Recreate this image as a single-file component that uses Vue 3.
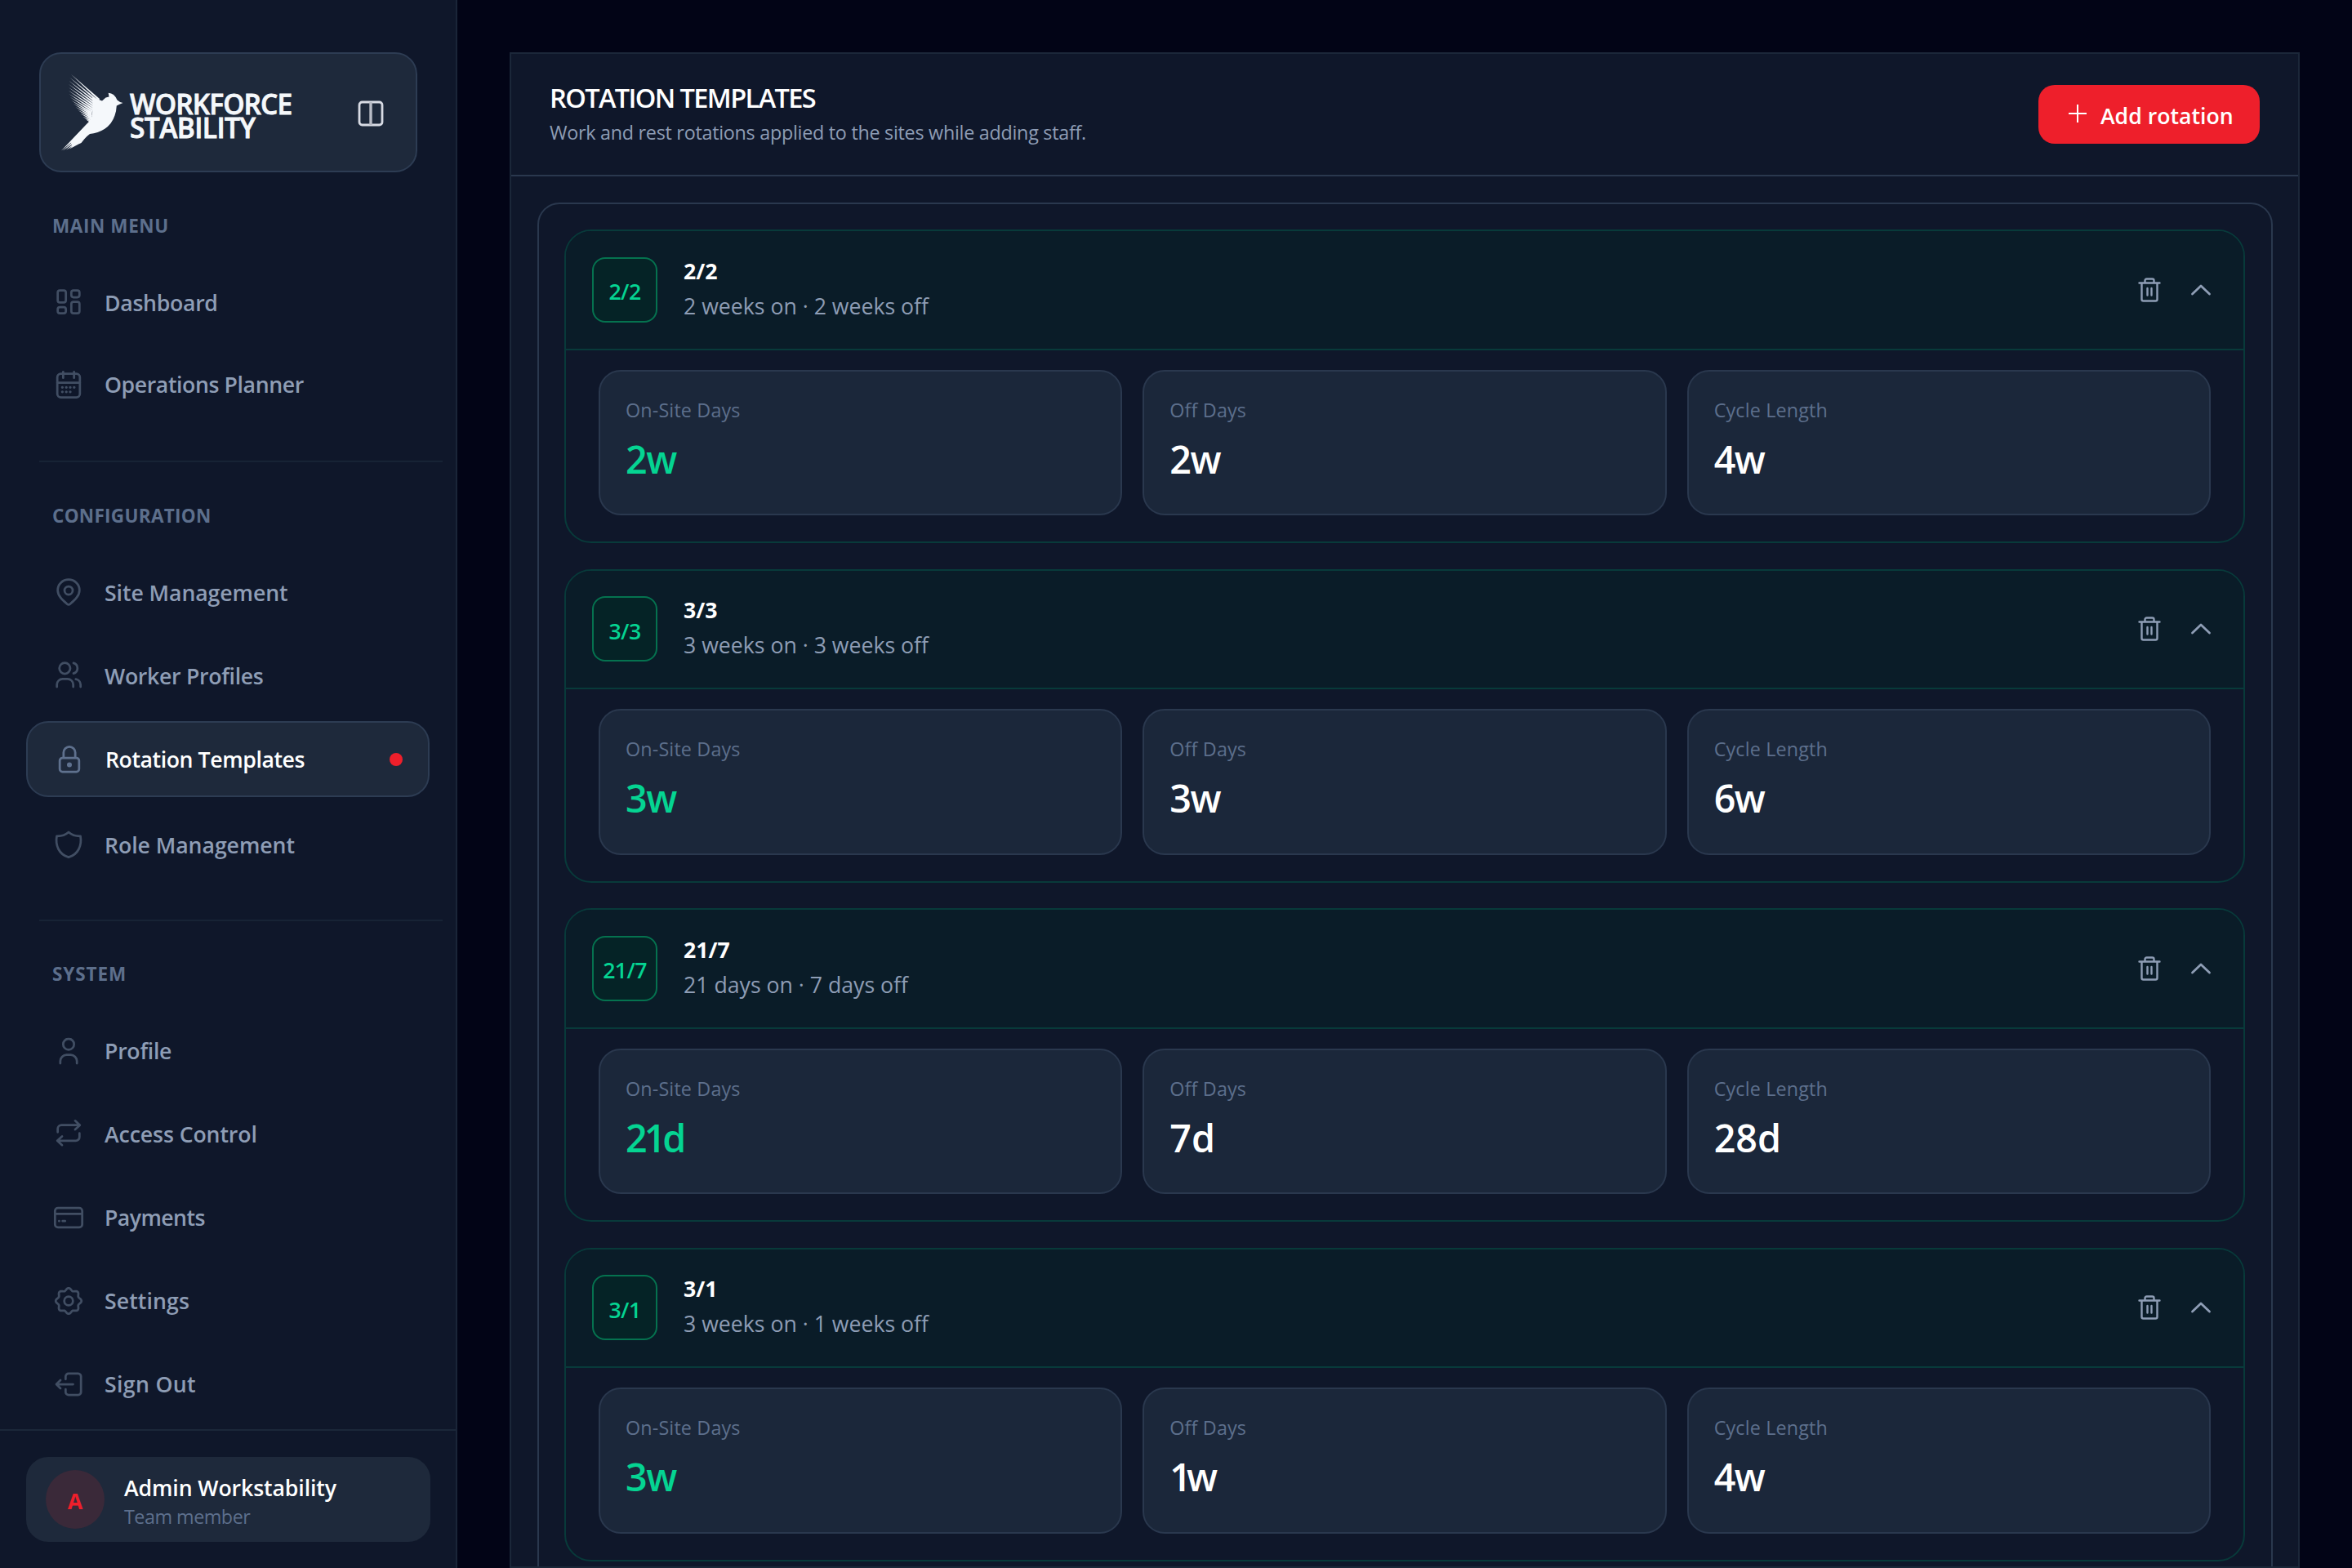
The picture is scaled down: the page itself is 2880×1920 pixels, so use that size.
<script setup>
const gear = Array.from({ length: 121 }, (_, i) => {
  const a = (i / 120) * Math.PI * 2
  const r = 8.6 + 0.85 * Math.cos(8 * a)
  return `${i ? 'L' : 'M'}${(12 + r * Math.sin(a)).toFixed(2)} ${(12 - r * Math.cos(a)).toFixed(2)}`
}).join('') + 'Z'

const icons = {
  dashboard: '<rect x="4" y="2.800" width="6" height="8.800" rx="1.600"/><rect x="14" y="2.800" width="6" height="5" rx="1.600"/><rect x="4" y="15" width="6" height="4.600" rx="1.600"/><rect x="14" y="11.200" width="6" height="8.400" rx="1.600"/>',
  calendar: '<rect x="3.700" y="4" width="16.600" height="17.400" rx="2.600"/><path d="M3.700 10.600h16.600M8 2.600v4.400M16 2.600v4.400"/><path stroke-width="2" d="M7.400 14h.01M10.300 14h.01M13.200 14h.01M16.100 14h.01M7.400 17.300h.01M10.300 17.300h.01M13.200 17.300h.01"/>',
  pin: '<path d="M20 10c0 4.400-4 7.600-7 10.200a1.500 1.500 0 0 1-2 0C8 17.600 4 14.400 4 10a8 7.800 0 0 1 16 0Z"/><circle cx="12" cy="10.200" r="3"/>',
  users: '<circle cx="9.200" cy="6.800" r="4"/><path d="M3.400 20.400v-1.600a4.200 4.200 0 0 1 4.200-4.200h3.600a4.200 4.200 0 0 1 4.200 4.200v1.600M15.600 2.900a4 4 0 0 1 0 7.700M17.300 14.800a4.200 4.200 0 0 1 3.500 4v1.600"/>',
  lock: '<rect x="4.900" y="10.800" width="14.200" height="10.200" rx="2"/><path d="M7.700 10.600V6.900a4.300 4.300 0 0 1 8.600 0v3.700"/><circle cx="12" cy="15.900" r="1" fill="currentColor"/>',
  shield: '<path d="M12 2.400c2.200 1.900 5 3 8.700 2.900 1.200 6.800-1.600 13.500-8.700 15.500C4.900 18.800 2.100 12.100 3.300 5.300c3.700.1 6.500-1 8.700-2.900Z"/>',
  user: '<circle cx="12" cy="7" r="4"/><path d="M5.900 21v-1.600a4.600 4.600 0 0 1 4.600-4.600h3a4.600 4.600 0 0 1 4.600 4.600V21"/>',
  repeat: '<path d="m16.800 2 3.500 3.200-3.500 3.200M4 10.400V8a2.800 2.800 0 0 1 2.800-2.800h13M7.200 13.500 3.700 16.700l3.500 3.200M20 11.200v2.700a2.800 2.800 0 0 1-2.800 2.800H4.200"/>',
  card: '<rect x="2" y="4.850" width="20" height="14.300" rx="2.200"/><path d="M2 9.200h20M5 14.500h.1M7.600 14.500h1.800"/>',
  gear: `<circle cx="12" cy="12" r="3.200"/><path d="${gear}"/>`,
  logout: '<path d="M9.800 8.300V6.300A2.200 2.200 0 0 1 12 4.100h7A2.200 2.200 0 0 1 21.100 6.300v11.400A2.200 2.200 0 0 1 19 19.900h-7a2.200 2.200 0 0 1-2.200-2.200v-2M15.300 12H3M6 9l-3 3 3 3"/>',
}

const groups = [
  {
    title: 'MAIN MENU', track: 0.6, cls: 'g-main',
    items: [
      { icon: 'dashboard', label: 'Dashboard', track: -0.3 },
      { icon: 'calendar', label: 'Operations Planner', track: -0.4 },
    ],
  },
  {
    title: 'CONFIGURATION', track: 0.3, cls: 'g-config',
    items: [
      { icon: 'pin', label: 'Site Management', track: -0.08 },
      { icon: 'users', label: 'Worker Profiles', track: -0.3 },
      { icon: 'lock', label: 'Rotation Templates', track: -0.42, active: true },
      { icon: 'shield', label: 'Role Management', track: -0.06 },
    ],
  },
  {
    title: 'SYSTEM', track: 0.9, cls: 'g-system',
    items: [
      { icon: 'user', label: 'Profile', track: -0.26 },
      { icon: 'repeat', label: 'Access Control', track: -0.1 },
      { icon: 'card', label: 'Payments', track: -0.57 },
      { icon: 'gear', label: 'Settings', track: 0.1 },
      { icon: 'logout', label: 'Sign Out', track: 0.34 },
    ],
  },
]

const rotations = [
  { name: '2/2', note: '2 weeks on · 2 weeks off', on: '2w', off: '2w', cycle: '4w' },
  { name: '3/3', note: '3 weeks on · 3 weeks off', on: '3w', off: '3w', cycle: '6w' },
  { name: '21/7', note: '21 days on · 7 days off', on: '21d', off: '7d', cycle: '28d' },
  { name: '3/1', note: '3 weeks on · 1 weeks off', on: '3w', off: '1w', cycle: '4w' },
]

// Figures holding a "1" are set tighter so the narrow digit doesn't leave a hole.
const tracking = (v) => ({ letterSpacing: v === '1w' ? '-6px' : v === '21d' ? '-4px' : v.endsWith('w') ? '-1.5px' : '0' })

const outline = [[12, 1], [10.5, 5], [9.5, 9], [9, 13], [9, 17], [9, 21], [9.5, 25], [11, 29], [12.5, 33], [15, 37], [17.5, 41], [20.5, 45], [23.5, 49], [26.5, 53], [30, 56]]
const feathers = outline.map(([x, y], i) => {
  const t = i / 14
  const rx = 47 - 9 * Math.min(1, t * 1.8)
  const ry = 31 + t * 28
  return `M${x} ${y}L${rx} ${ry}L${rx - 1} ${ry + 2.6}Z`
})
</script>

<template>
  <div class="app">
    <aside class="sidebar">
      <div class="brand">
        <svg class="bird" viewBox="0 0 78 96">
          <path v-for="(f, i) in feathers" :key="i" :d="f" />
          <path d="M38 29 50 33.500 54.500 29.500 58.500 28.500 57.700 23.700Q65 24 68.500 32.500 71 35 75.500 36 71 37.500 67.800 39.500 67.500 46 65.500 51.500 62 62 53.300 67.700 45 73 35 74 31 77 28.300 80.300L24.500 85 13 88 11.700 83 36.700 56Q39.500 45 38 29Z" />
          <path d="M34 59 0 94.500 14 83ZM20 78 2 94.500 17 84ZM22 80 6 93.500 21 85ZM24 80 10 92.500 24 85Z" />
        </svg>
        <div class="wordmark"><span>WORKFORCE</span><span class="second">STABILITY</span></div>
        <svg class="collapse" viewBox="0 0 32 32" fill="none" stroke="#d8dbe4" stroke-width="2.800">
          <rect x="2" y="2" width="28" height="28" rx="3.500" /><path d="M16 2v28" stroke="#b9bcc6" stroke-width="3.400" />
        </svg>
      </div>

      <nav>
        <section v-for="g in groups" :key="g.title" class="group" :class="g.cls">
          <h2 :style="{ letterSpacing: g.track + 'px' }">{{ g.title }}</h2>
          <a v-for="it in g.items" :key="it.label" class="item" :class="{ active: it.active }">
            <svg class="ico" viewBox="0 0 24 24" v-html="icons[it.icon]" />
            <span :style="{ letterSpacing: it.track + 'px' }">{{ it.label }}</span>
            <i v-if="it.active" class="dot" />
          </a>
        </section>
      </nav>

      <footer class="foot">
        <div class="account">
          <div class="avatar">A</div>
          <div class="who"><b>Admin Workstability</b><span>Team member</span></div>
        </div>
      </footer>
    </aside>

    <main class="main">
      <div class="panel">
        <header class="head">
          <div class="heading">
            <h1>ROTATION TEMPLATES</h1>
            <p>Work and rest rotations applied to the sites while adding staff.</p>
          </div>
          <button class="add">
            <svg viewBox="0 0 24 24" fill="none" stroke="#fff" stroke-width="2"><path d="M12 1v22M1 12h22" /></svg>
            <span>Add rotation</span>
          </button>
        </header>
        <div class="list">
          <article v-for="r in rotations" :key="r.name" class="rotation">
            <div class="top">
              <div class="badge">{{ r.name }}</div>
              <div class="meta"><b>{{ r.name }}</b><span>{{ r.note }}</span></div>
              <svg class="trash" viewBox="0 0 28 32" fill="none" stroke="currentColor" stroke-width="2.400" stroke-linecap="round" stroke-linejoin="round">
                <path d="M1.500 7.500h25M8.500 7V4.500a2 2 0 0 1 2-2h7a2 2 0 0 1 2 2V7M4.500 8v19.500a2 2 0 0 0 2 2h15a2 2 0 0 0 2-2V8M11.500 14v8.500M16.500 14v8.500" />
              </svg>
              <svg class="chev" viewBox="0 0 26 16" fill="none" stroke="currentColor" stroke-width="2.800" stroke-linecap="round" stroke-linejoin="round"><path d="M2.500 13 13 3l10.500 10" /></svg>
            </div>
            <div class="tiles">
              <div class="tile"><span>On-Site Days</span><b class="green" :style="tracking(r.on)">{{ r.on }}</b></div>
              <div class="tile"><span>Off Days</span><b :style="tracking(r.off)">{{ r.off }}</b></div>
              <div class="tile"><span>Cycle Length</span><b :style="tracking(r.cycle)">{{ r.cycle }}</b></div>
            </div>
          </article>
        </div>
      </div>
    </main>
  </div>
</template>

<style>
body { background: #020416; overflow: hidden; }
</style>

<style scoped>
* { box-sizing: border-box; margin: 0; }
.app {
  display: flex; width: 2880px; height: 1920px; overflow: hidden; background: #020416;
  font-family: "Open Sans", "Noto Sans", sans-serif; white-space: nowrap; color: #fff;
}
.sidebar { width: 560px; height: 1920px; background: #0f172a; border-right: 2px solid #1a2538; display: flex; flex-direction: column; flex: none; }
.brand { margin: 64px 48px 0; width: 463px; height: 147px; border: 2px solid #2d3c53; border-radius: 27px; background: #1e293b; display: flex; align-items: flex-start; padding: 24px 39px 0 25px; flex: none; }
.bird { width: 78px; height: 96px; fill: #f5f8fb; flex: none; }
.wordmark { display: flex; flex-direction: column; margin: 23px 0 0 6px; font: 600 33.500px/29px "Open Sans", sans-serif; letter-spacing: -0.900px; color: #f5f8fb; -webkit-text-stroke: 0.800px #f5f8fb; }
.second { letter-spacing: -0.600px; }
.collapse { width: 32px; height: 32px; margin: 33px 0 0 auto; }
nav { flex: 1; }
.group { border-top: 2px solid transparent; }
.group h2 { font-size: 22.500px; line-height: 34px; font-weight: 700; color: #5d6f8c; padding-left: 64px; }
.g-main { padding-top: 47px; height: 353px; }
.g-config { height: 562px; padding-top: 50px; }
.g-system { padding-top: 50px; }
.g-config::before, .g-system::before { content: ""; display: block; height: 2px; margin: -52px 16px 49px 48px; background: #172335; }
.g-system::before { margin-bottom: 48px; }
.item { display: flex; align-items: center; height: 93px; margin: 0 32px 8.500px; padding-left: 32px; border-radius: 27px; font-size: 26.670px; font-weight: 600; color: #8e9db5; }
.g-main .item { margin-bottom: 7px; }
.g-system .item { margin-bottom: 9px; }
.group h2 + .item { margin-top: 30px; }
.ico { width: 40px; height: 40px; fill: none; stroke: currentColor; stroke-width: 1.650; stroke-linecap: round; stroke-linejoin: round; color: #414e63; margin-right: 24px; flex: none; }
.item.active { background: #1e293b; border: 2px solid #2d3c53; color: #fff; margin: 9.500px 32px 12px; padding-left: 31px; }
.active .ico { color: #5f718e; }
.dot { width: 16px; height: 16px; border-radius: 50%; background: #ee1f2b; margin: 0 31px 0 auto; }
.foot { height: 170px; border-top: 2px solid #1b2739; padding: 32px; flex: none; }
.account { width: 495px; height: 104px; border-radius: 27px; background: #1e293b; display: flex; align-items: center; padding-left: 24px; }
.avatar { width: 72px; height: 72px; padding-top: 3px; border-radius: 50%; background: #3a2939; color: #ee1f2b; font-size: 26.670px; font-weight: 700; display: grid; place-items: center; margin-right: 24px; }
.who { display: flex; flex-direction: column; padding-top: 5px; }
.who b { font-size: 26.670px; line-height: 38px; font-weight: 600; letter-spacing: -0.100px; }
.who span { font-size: 23.330px; line-height: 33px; color: #5d6f8c; letter-spacing: -0.500px; }

.main { flex: 1; padding: 64px 64px 0; }
.panel { height: 1856px; border: 2px solid #1b2739; background: #0f172a; overflow: hidden; }
.head { height: 150px; border-bottom: 2px solid #2a384e; display: flex; justify-content: space-between; padding: 0 47px; }
.heading { padding-top: 32px; }
h1 { font-size: 32.500px; line-height: 44px; font-weight: 600; letter-spacing: -1.600px; }
.heading p { font-size: 23.330px; line-height: 40px; color: #8e9db5; letter-spacing: -0.270px; }
.add { width: 271px; height: 72px; margin-top: 38px; border: 0; border-radius: 20px; background: #ee1f2b; color: #fff; font: 600 26.670px "Open Sans", sans-serif; display: flex; align-items: center; padding: 2px 0 0 36px; }
.add svg { width: 24px; height: 24px; margin: 0 16px 4px 0; }
.list { margin: 32px 31px 0 32px; height: 1900px; border: 2px solid #2a384e; border-radius: 27px; padding: 31px 32px 32px 31px; display: flex; flex-direction: column; gap: 31.500px; }
.rotation { height: 384px; flex: none; border: 2px solid #083a3a; border-radius: 33px; overflow: hidden; }
.top { height: 145.500px; background: #0a1c28; border-bottom: 2px solid #083a3a; display: flex; align-items: center; padding: 0 39px 0 32px; color: #8e9db5; }
.badge { width: 80px; height: 80px; padding-top: 4px; border: 2px solid #05724f; border-radius: 16px; background: #052326; color: #05d492; font-size: 26.670px; font-weight: 600; letter-spacing: -0.600px; display: grid; place-items: center; }
.meta { display: flex; flex-direction: column; margin: 0 auto 0 32px; }
.meta b { font-size: 26.670px; line-height: 40px; font-weight: 700; color: #fff; }
.meta span { font-size: 26.670px; line-height: 46px; }
.trash { width: 28px; height: 32px; margin-right: 36px; }
.chev { width: 26px; height: 16px; }
.tiles { display: grid; grid-template-columns: repeat(3, 1fr); gap: 25px; padding: 24px 40px 0; }
.tile { height: 178.500px; border: 2px solid #2a384e; border-radius: 27px; background: #1b273a; padding: 30px 31px; display: flex; flex-direction: column; }
.tile span { font-size: 23.330px; line-height: 34px; color: #5d6f8c; letter-spacing: 0.150px; }
.tile b { font-size: 46.670px; line-height: 64px; font-weight: 600; margin-top: 11px; }
.tile .green { color: #05d492; }
</style>
